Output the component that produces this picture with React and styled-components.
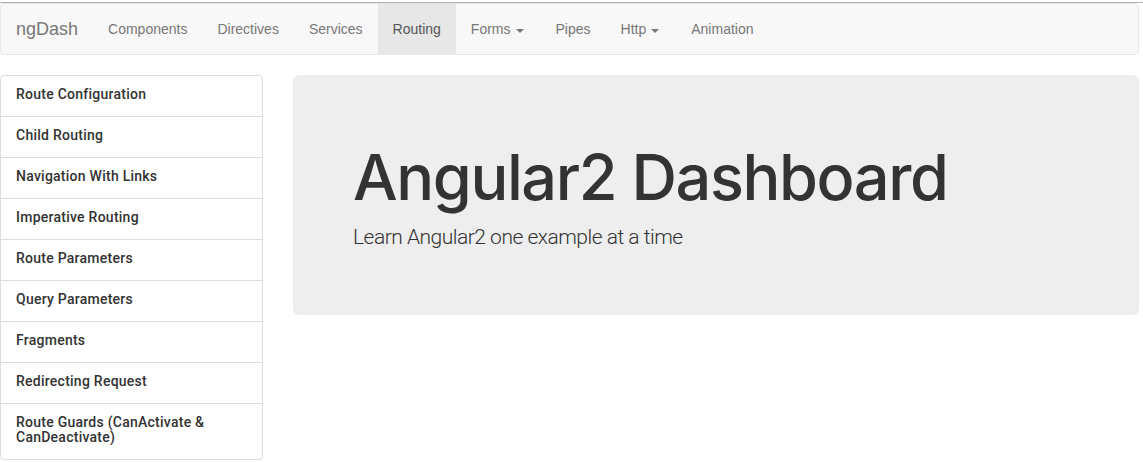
import React from "react";
import styled, { createGlobalStyle } from "styled-components";

const Global = createGlobalStyle`
  html, body { margin: 0; padding: 0; background: #fff; }
  body {
    font-family: "Liberation Sans", Arial, sans-serif;
    font-size: 14px;
    line-height: 1.42857;
    color: #333;
  }
  * { box-sizing: border-box; }
`;

const Page = styled.div`
  width: 1139px;
  padding-top: 2px;
`;

const TopRule = styled.div`
  width: 1143px;
  height: 1px;
  background: #b0b0b0;
`;

const Navbar = styled.nav`
  display: flex;
  align-items: stretch;
  height: 52px;
  background: #f8f8f8;
  border: 1px solid #e7e7e7;
  border-radius: 4px;
  margin-bottom: 20px;
`;

const Brand = styled.a`
  display: flex;
  align-items: center;
  padding: 1px 15px 0;
  font-size: 18px;
  color: #777;
  text-decoration: none;
`;

const NavList = styled.ul`
  display: flex;
  list-style: none;
  margin: 0;
  padding: 0;
`;

const NavItem = styled.li`
  display: flex;
  align-items: center;
  padding: 2px 15px 0;
  font-size: 14px;
  color: ${(p) => (p.$active ? "#555" : "#777")};
  background: ${(p) => (p.$active ? "#e7e7e7" : "transparent")};
`;

const Caret = styled.span`
  display: inline-block;
  width: 0;
  height: 0;
  margin-left: 5px;
  margin-right: 2px;
  margin-top: 2px;
  border-top: 4px solid #777;
  border-left: 4px solid transparent;
  border-right: 4px solid transparent;
`;

const Main = styled.div`
  display: grid;
  grid-template-columns: 263px 1fr;
  column-gap: 30px;
  align-items: start;
`;

const ListGroup = styled.div`
  border: 1px solid #ddd;
  border-radius: 4px;
  background: #fff;
`;

const ListItem = styled.a`
  display: block;
  padding: 11px 15px 14px;
  line-height: 15px;
  font-family: Roboto, "Liberation Sans", sans-serif;
  font-size: 14px;
  font-weight: 500;
  letter-spacing: 0.25px;
  color: #333;
  text-decoration: none;
  & + & { border-top: 1px solid #ddd; }
`;

const Jumbotron = styled.div`
  background: #eee;
  border-radius: 6px;
  padding: 48px 60px;
`;

const Title = styled.h1`
  margin: 20px 0 10px;
  font-family: Inter, "Liberation Sans", sans-serif;
  font-size: 63px;
  font-weight: 500;
  line-height: 1.1;
  letter-spacing: -1.4px;
  color: #333;
`;

const Lead = styled.p`
  margin: 0 0 15px;
  font-family: Roboto, "Liberation Sans", sans-serif;
  font-size: 21px;
  font-weight: 300;
  line-height: 30px;
  letter-spacing: -0.5px;
  color: #333;
`;

const navItems = [
  { label: "Components" },
  { label: "Directives" },
  { label: "Services" },
  { label: "Routing", active: true },
  { label: "Forms", caret: true },
  { label: "Pipes" },
  { label: "Http", caret: true },
  { label: "Animation" },
];

const links = [
  "Route Configuration",
  "Child Routing",
  "Navigation With Links",
  "Imperative Routing",
  "Route Parameters",
  "Query Parameters",
  "Fragments",
  "Redirecting Request",
  "Route Guards (CanActivate & CanDeactivate)",
];

export default function App() {
  return (
    <>
      <Global />
      <Page>
        <TopRule />
        <Navbar>
          <Brand>ngDash</Brand>
          <NavList>
            {navItems.map((n) => (
              <NavItem key={n.label} $active={n.active}>
                {n.label}
                {n.caret && <Caret />}
              </NavItem>
            ))}
          </NavList>
        </Navbar>
        <Main>
          <ListGroup>
            {links.map((l) => (
              <ListItem key={l}>{l}</ListItem>
            ))}
          </ListGroup>
          <Jumbotron>
            <Title>Angular2 Dashboard</Title>
            <Lead>Learn Angular2 one example at a time</Lead>
          </Jumbotron>
        </Main>
      </Page>
    </>
  );
}
